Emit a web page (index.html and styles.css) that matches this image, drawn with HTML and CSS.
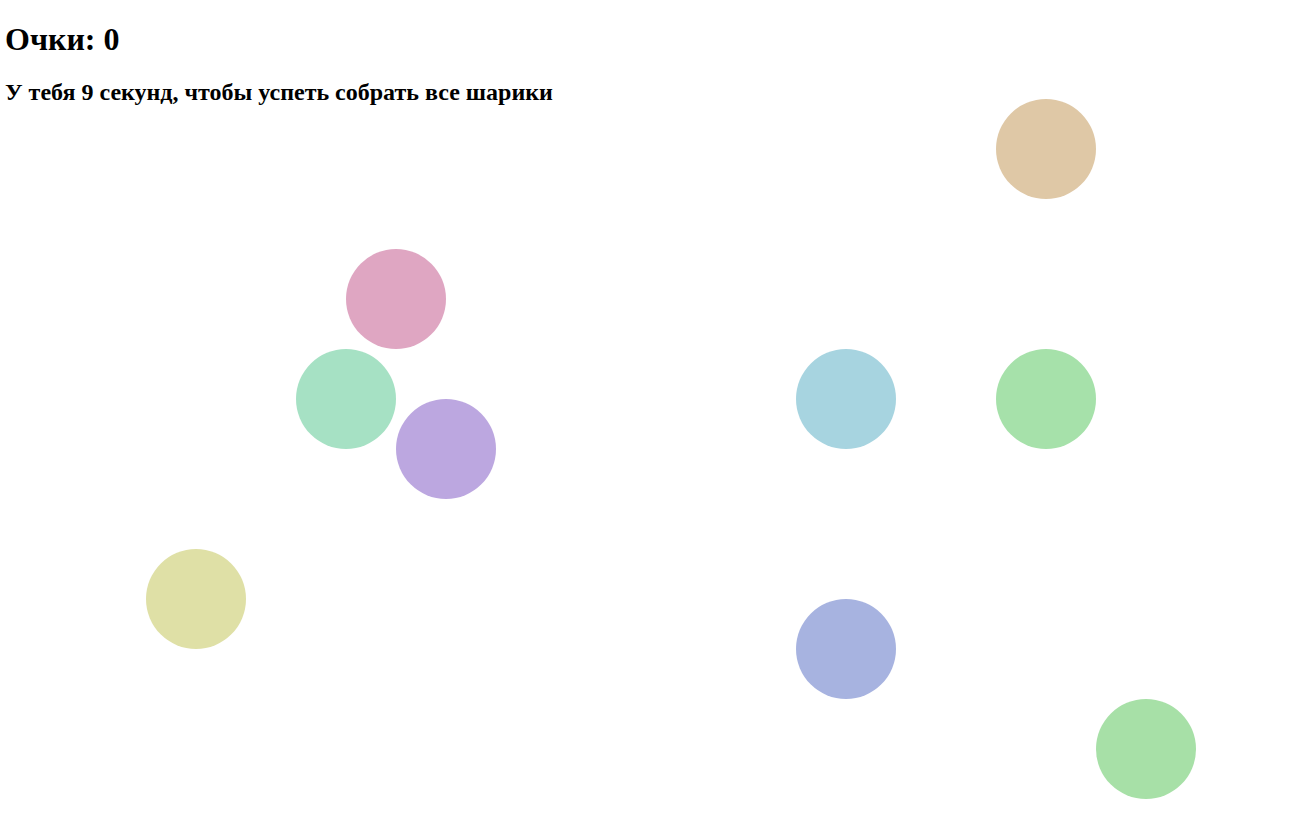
FILE: index.html
```html
<!DOCTYPE html>
<html lang="ru">
<head>
<meta charset="utf-8">
<title>Шарики</title>
<link rel="stylesheet" href="styles.css">
</head>
<body>
<h1 class="score">Очки: 0</h1>
<h2 class="hint">У тебя 9 секунд, чтобы успеть собрать все шарики</h2>
<div class="field">
  <div class="ball ball-tan" style="left:996px;top:99px"></div>
  <div class="ball ball-pink" style="left:346px;top:249px"></div>
  <div class="ball ball-mint" style="left:296px;top:349px"></div>
  <div class="ball ball-purple" style="left:396px;top:399px"></div>
  <div class="ball ball-sky" style="left:796px;top:349px"></div>
  <div class="ball ball-green" style="left:996px;top:349px"></div>
  <div class="ball ball-olive" style="left:146px;top:549px"></div>
  <div class="ball ball-blue" style="left:796px;top:599px"></div>
  <div class="ball ball-green2" style="left:1096px;top:699px"></div>
</div>
</body>
</html>
```
FILE: styles.css
```css
html, body {
  margin: 0;
  padding: 0;
  background: #ffffff;
}
body {
  padding: 0 5px;
  font-family: "Liberation Serif", "Times New Roman", serif;
  color: #000;
}
.score {
  font-size: 32px;
  font-weight: bold;
  margin: 21px 0;
}
.hint {
  font-size: 24px;
  font-weight: bold;
  margin: 19.92px 0;
}
.ball {
  position: absolute;
  width: 100px;
  height: 100px;
  border-radius: 50%;
}
.ball-tan { background: #dfc8a6; }
.ball-pink { background: #dfa6c2; }
.ball-mint { background: #a6e1c4; }
.ball-purple { background: #bca7e0; }
.ball-sky { background: #a7d4e0; }
.ball-green { background: #a6e1aa; }
.ball-olive { background: #dfe0a6; }
.ball-blue { background: #a7b3e0; }
.ball-green2 { background: #a7e0a7; }
```
